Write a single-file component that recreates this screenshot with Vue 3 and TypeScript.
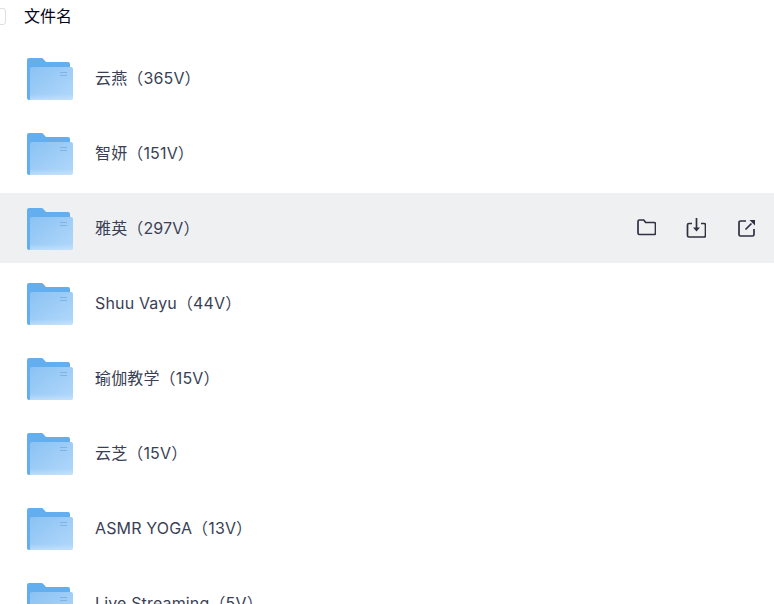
<script setup lang="ts">
const rows = [
  '云燕（365V）',
  '智妍（151V）',
  '雅英（297V）',
  'Shuu Vayu（44V）',
  '瑜伽教学（15V）',
  '云芝（15V）',
  'ASMR YOGA（13V）',
  'Live Streaming（5V）',
]
const activeRow = 2
</script>

<template>
  <main class="page">
    <header class="head">
      <span class="check"></span>
      <span class="head-title">文件名</span>
    </header>
    <ul class="list">
      <li v-for="(name, i) in rows" :key="name" class="row" :class="{ active: i === activeRow }">
        <svg class="folder" width="46" height="42" viewBox="0 0 46 42">
          <defs>
            <linearGradient :id="`front${i}`" x1="0" y1="0" x2="1" y2="1">
              <stop offset="0" stop-color="#8ac2f3" />
              <stop offset="1" stop-color="#b2d8fb" />
            </linearGradient>
            <linearGradient :id="`band${i}`" x1="0" y1="0" x2="0" y2="1">
              <stop offset="0" stop-color="#d4e9fc" stop-opacity="0" />
              <stop offset="1" stop-color="#d4e9fc" stop-opacity=".55" />
            </linearGradient>
          </defs>
          <path d="M0 2a2 2 0 0 1 2-2h12.500a2 2 0 0 1 1.600.8L19 4h22a2 2 0 0 1 2 2v34a2 2 0 0 1-2 2H2a2 2 0 0 1-2-2z" fill="#62aeee" />
          <path d="M3 11a2 2 0 0 1 2-2h39a2 2 0 0 1 2 2v29a2 2 0 0 1-2 2H2.500a2 2 0 0 0 .5-2z" :fill="`url(#front${i})`" />
          <path d="M3 36h43v4a2 2 0 0 1-2 2H2.500a2 2 0 0 0 .5-2z" :fill="`url(#band${i})`" />
          <path d="M33 14.500h7M33 17.500h7" stroke="#7fb3e3" stroke-width="1" />
        </svg>
        <span class="name">{{ name }}</span>
        <div v-if="i === activeRow" class="actions">
          <svg width="20" height="20" viewBox="0 0 20 20" fill="none" stroke="#2d3142" stroke-width="1.700" stroke-linejoin="round">
            <path d="M2 3.500A1.500 1.500 0 0 1 3.500 2h4.200l2 2.500h8.300a1.500 1.500 0 0 1 1.500 1.500v9a1.500 1.500 0 0 1-1.500 1.500H3.500A1.500 1.500 0 0 1 2 15z" />
          </svg>
          <svg width="20" height="20" viewBox="0 0 20 20" fill="none" stroke="#2d3142" stroke-width="1.700" stroke-linejoin="round">
            <path d="M6 5.500H3A1.500 1.500 0 0 0 1.500 7v10.500A1.500 1.500 0 0 0 3 19h15a1.500 1.500 0 0 0 1.500-1.500V7A1.500 1.500 0 0 0 18 5.500h-3" />
            <path d="M10.500 0v11" />
            <path d="M7 9.500h7l-3.500 4z" fill="#2d3142" stroke="none" />
          </svg>
          <svg width="20" height="20" viewBox="0 0 20 20" fill="none" stroke="#2d3142" stroke-width="1.700" stroke-linejoin="round">
            <path d="M10 3H4.500A1.500 1.500 0 0 0 3 4.500v12A1.500 1.500 0 0 0 4.500 18h12a1.500 1.500 0 0 0 1.500-1.500V11" />
            <path d="M9.500 11.500 15.500 5.500" />
            <path d="M13.500 2H19v5.500z" fill="#2d3142" stroke="none" />
          </svg>
        </div>
      </li>
    </ul>
  </main>
</template>

<style>
html,
body {
  overflow: hidden;
  background: #fff;
}
</style>

<style scoped>
.page {
  height: 604px;
  overflow: hidden;
  font-family: Inter, "Noto Sans CJK SC", sans-serif;
}

.head {
  display: flex;
  align-items: center;
  height: 33px;
}

.check {
  box-sizing: border-box;
  width: 16px;
  height: 17px;
  margin-left: -10px;
  margin-right: 18px;
  border: 1px solid #dcdfe6;
  border-radius: 3px;
  background: #fff;
}

.head-title {
  font-size: 16px;
  line-height: 20px;
  margin-top: -1px;
  color: #05051a;
}

.list {
  display: flex;
  flex-direction: column;
  gap: 5px;
  margin: 10px 0 0;
  padding: 0;
  list-style: none;
}

.row {
  display: flex;
  flex: none;
  align-items: center;
  height: 70px;
  padding: 0 18px 0 27px;
}

.row.active {
  background: #eff0f2;
}

.folder {
  flex: none;
  margin-top: 2px;
}

.name {
  margin-left: 22px;
  font-size: 16px;
  line-height: 20px;
  letter-spacing: .15px;
  color: #3a3f55;
}

.actions {
  display: flex;
  gap: 30px;
  margin-left: auto;
}
</style>
